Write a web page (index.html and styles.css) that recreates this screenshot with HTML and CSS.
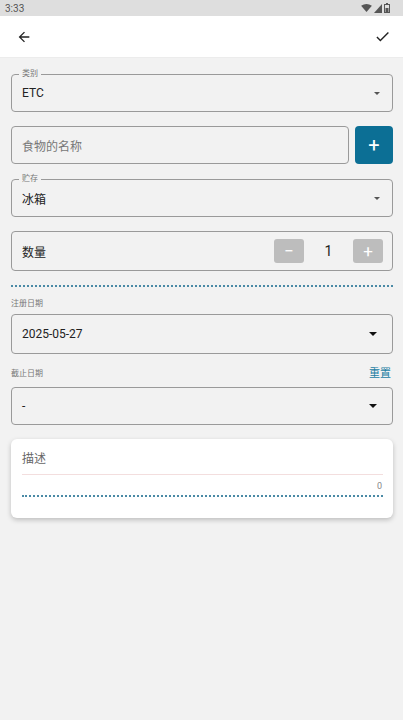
FILE: index.html
```html
<!DOCTYPE html>
<html lang="zh">
<head>
    <meta charset="UTF-8">
    <meta name="viewport" content="width=device-width, initial-scale=1.0">
    <title>添加食物</title>
    <link rel="stylesheet" href="styles.css">
</head>
<body>
    <!-- Status bar -->
    <div class="status-bar">
        <span class="time">3:33</span>
        <span class="status-icons">
            <svg width="11" height="9" viewBox="0 0 12 10"><path d="M0 2 Q6 -2 12 2 L6 9 Z" fill="#555"/></svg>
            <svg width="8" height="9" viewBox="0 0 8 9"><path d="M8 0 L8 9 L0 9 Z" fill="#555"/></svg>
            <svg width="6" height="10" viewBox="0 0 6 10"><rect x="0.5" y="1.5" width="5" height="8" fill="none" stroke="#555"/><rect x="2" y="0" width="2" height="1.5" fill="#555"/><rect x="1.5" y="5" width="3" height="4" fill="#555"/></svg>
        </span>
    </div>

    <!-- App bar -->
    <div class="app-bar">
        <svg class="icon" width="16" height="16" viewBox="0 0 24 24"><path d="M20 11H7.83l5.59-5.59L12 4l-8 8 8 8 1.41-1.41L7.83 13H20v-2z" fill="#222"/></svg>
        <svg class="icon" width="17" height="17" viewBox="0 0 24 24"><path d="M9 16.17L4.83 12l-1.42 1.41L9 19 21 7l-1.41-1.41z" fill="#222"/></svg>
    </div>

    <div class="content">
        <div class="field select">
            <span class="legend">类别</span>
            <span class="value">ETC</span>
            <span class="caret small"></span>
        </div>

        <div class="name-row">
            <div class="field input">
                <span class="placeholder">食物的名称</span>
            </div>
            <button class="add-btn">+</button>
        </div>

        <div class="field select">
            <span class="legend">贮存</span>
            <span class="value">冰箱</span>
            <span class="caret small"></span>
        </div>

        <div class="field qty">
            <span class="value">数量</span>
            <div class="stepper">
                <button class="step-btn">−</button>
                <span class="qty-num">1</span>
                <button class="step-btn">+</button>
            </div>
        </div>

        <div class="dots"></div>

        <div class="label-row">
            <span class="small-label">注册日期</span>
        </div>
        <div class="field date">
            <span class="value">2025-05-27</span>
            <span class="caret"></span>
        </div>

        <div class="label-row with-action">
            <span class="small-label">截止日期</span>
            <span class="reset">重置</span>
        </div>
        <div class="field date short">
            <span class="value">-</span>
            <span class="caret"></span>
        </div>

        <div class="card">
            <div class="desc">描述</div>
            <div class="counter">0</div>
            <div class="dots"></div>
        </div>
    </div>
</body>
</html>
```

FILE: styles.css
```css
body {
    margin: 0;
    padding: 0;
    width: 403px;
    height: 720px;
    background-color: #f2f2f2;
    font-family: Roboto, "Noto Sans CJK SC", sans-serif;
    color: #222;
}
.status-bar {
    height: 16px;
    background-color: #dedede;
    display: flex;
    align-items: center;
    justify-content: space-between;
    padding: 0 13px 0 5px;
}
.time {
    font-size: 10px;
    color: #555;
}
.status-icons {
    display: flex;
    align-items: center;
    gap: 2px;
}
.app-bar {
    height: 41px;
    background-color: #fff;
    border-bottom: 1px solid #ececec;
    display: flex;
    align-items: center;
    justify-content: space-between;
    padding: 0 12px 0 16px;
}
.content {
    padding: 16px 10px 0 11px;
    display: flex;
    flex-direction: column;
}
.field {
    position: relative;
    box-sizing: border-box;
    height: 38px;
    border: 1px solid #9a9a9a;
    border-radius: 4px;
    display: flex;
    align-items: center;
    justify-content: space-between;
    padding: 0 12px 0 10px;
}
.legend {
    position: absolute;
    top: -6px;
    left: 7px;
    padding: 0 3px;
    background-color: #f2f2f2;
    font-size: 8px;
    line-height: 10px;
    color: #777;
}
.value {
    font-size: 12px;
    color: #222;
}
.caret {
    width: 0;
    height: 0;
    border-left: 4px solid transparent;
    border-right: 4px solid transparent;
    border-top: 4px solid #111;
}
.caret.small {
    border-left-width: 3px;
    border-right-width: 3px;
    border-top: 3px solid #555;
}
.select {
    margin-bottom: 14px;
}
.name-row {
    display: flex;
    gap: 6px;
    margin-bottom: 15px;
}
.input {
    flex: 1;
}
.placeholder {
    font-size: 12px;
    color: #777;
}
.add-btn {
    width: 38px;
    height: 38px;
    border: none;
    border-radius: 4px;
    background-color: #0c6f95;
    color: #fff;
    font-size: 20px;
    font-family: Roboto, sans-serif;
    padding: 0;
}
.qty {
    height: 40px;
    padding-right: 9px;
}
.stepper {
    display: flex;
    align-items: center;
}
.step-btn {
    width: 30px;
    height: 24px;
    border: none;
    border-radius: 3px;
    background-color: #bdbdbd;
    color: #fff;
    font-size: 17px;
    font-family: Roboto, sans-serif;
    padding: 0;
}
.qty-num {
    width: 49px;
    text-align: center;
    font-size: 14px;
}
.dots {
    height: 0;
    border-top: 2px dotted #4a8aa6;
    margin-top: 14px;
}
.label-row {
    display: flex;
    justify-content: space-between;
    align-items: center;
    height: 12px;
    margin: 11px 2px 4px 0;
}
.label-row.with-action {
    height: 18px;
}
.small-label {
    font-size: 8px;
    line-height: 12px;
    color: #777;
}
.reset {
    font-size: 11px;
    line-height: 14px;
    color: #1b7ea3;
}
.date {
    height: 40px;
    padding-right: 15px;
}
.date.short {
    height: 38px;
}
.card {
    margin-top: 14px;
    background-color: #fff;
    border-radius: 6px;
    box-shadow: 0 2px 5px rgba(0, 0, 0, 0.22);
    padding: 12px 10px 21px 11px;
}
.desc {
    font-size: 12px;
    line-height: 17px;
    color: #666;
    padding-bottom: 6px;
    border-bottom: 1px solid #f3dede;
}
.counter {
    text-align: right;
    font-size: 9px;
    line-height: 10px;
    color: #888;
    margin-top: 6px;
    padding-right: 1px;
}
.card .dots {
    margin-top: 4px;
}
```
